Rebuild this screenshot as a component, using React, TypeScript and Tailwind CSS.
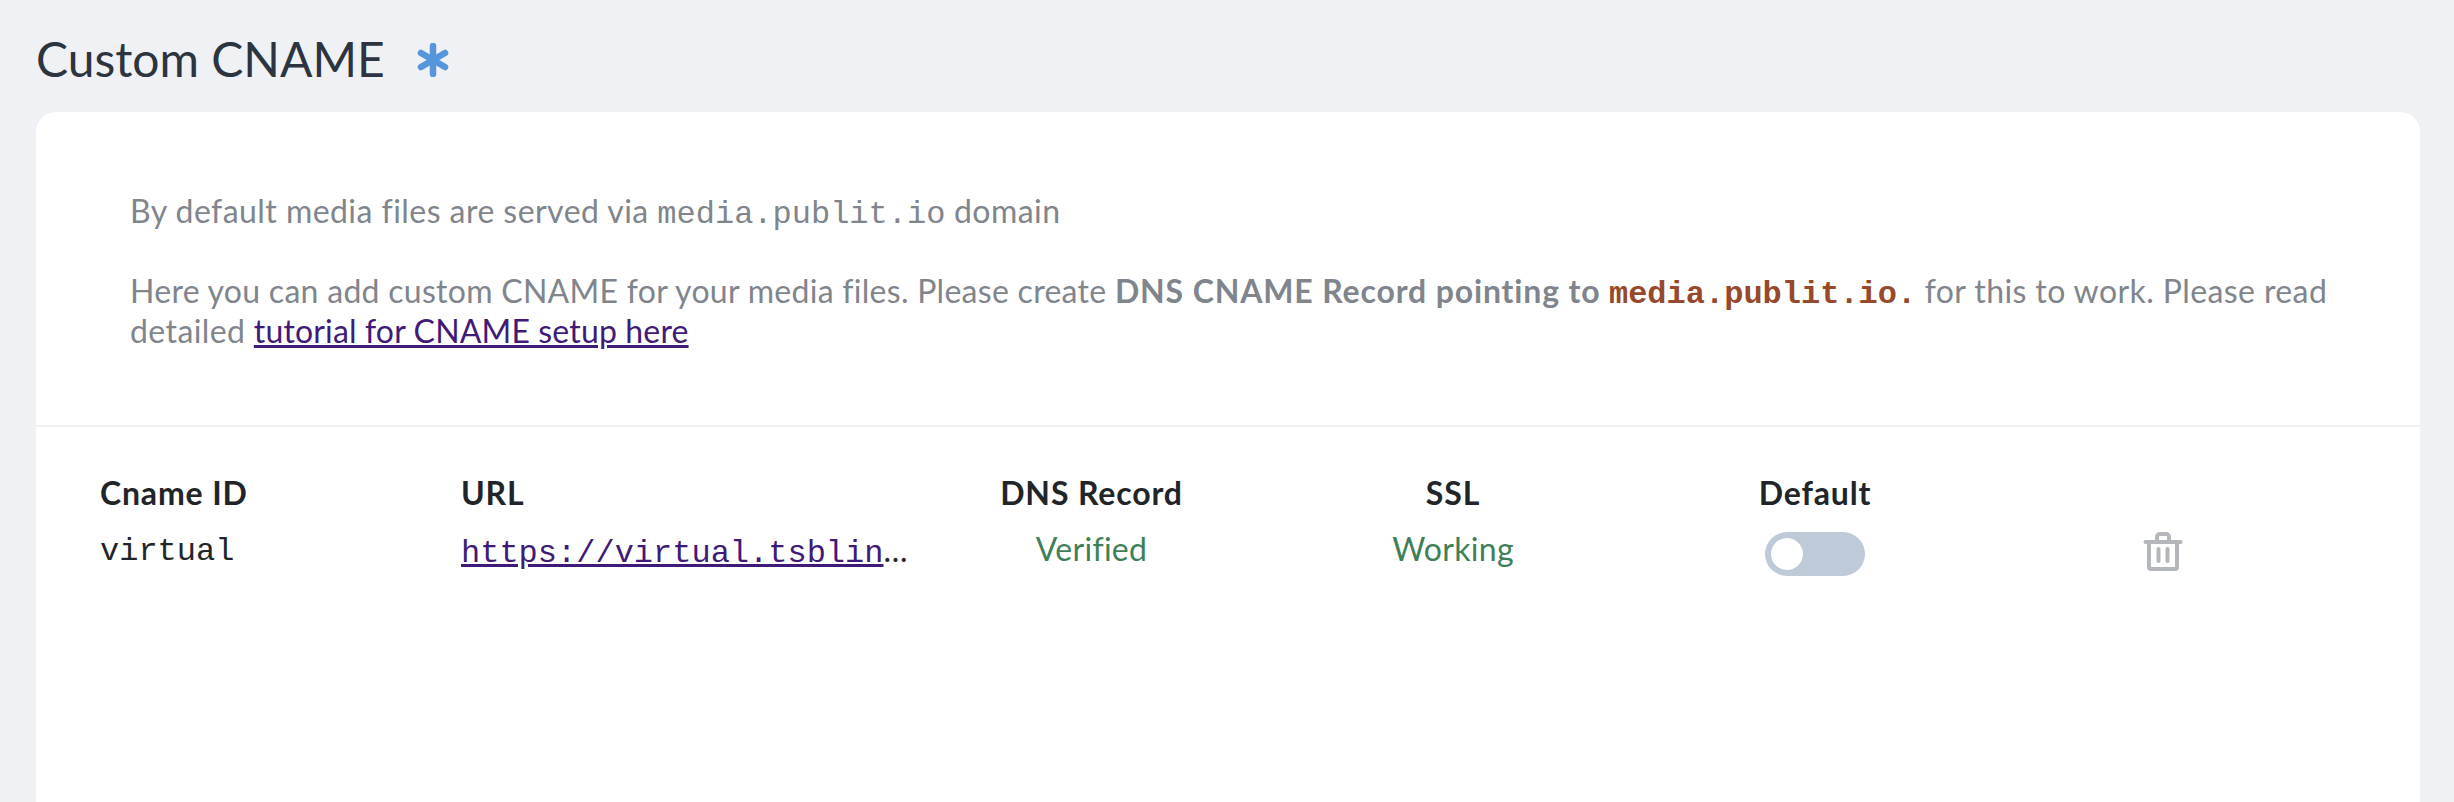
const sans = "font-['Lato','Noto_Sans',sans-serif]";
const mono = "font-['Liberation_Mono',monospace]";

function TrashIcon() {
  return (
    <svg viewBox="0 0 40 40" className="w-10 h-10" fill="none" stroke="#b3b6ba" strokeWidth="4" strokeLinecap="round" strokeLinejoin="round">
      <path d="M2.5 11h35" />
      <path d="M14 11V6a3 3 0 0 1 3-3h6a3 3 0 0 1 3 3V11" />
      <path d="M6 11v25a2 2 0 0 0 2 2h24a2 2 0 0 0 2-2V11" />
      <path d="M15.5 18v12M24.5 18v12" />
    </svg>
  );
}

export default function App() {
  return (
    <div className={`${sans} w-[2454px] h-[802px] overflow-hidden bg-[#eff1f5] pl-9 pr-[34px]`}>
      <div className="h-[112px] flex items-center gap-[32px] pt-[5px]">
        <h1 className="text-[48px] leading-none text-[#2c3440] font-normal">Custom CNAME</h1>
        <svg viewBox="0 0 32 34" className="w-8 h-[34px] mt-[3px]" stroke="#5596dc" strokeWidth="6.5" strokeLinecap="round">
          <path d="M16 3v28M4 10l24 14M28 10L4 24" />
        </svg>
      </div>

      <div className="bg-white rounded-t-[20px] h-[690px]">
        <div className="h-[315px] border-b-2 border-[#f0f1f3] pl-[94px] pr-[80px] pt-[79px] text-[32px] leading-[40px] tracking-[0.28px] text-[#80858d]">
          <p className="tracking-[0.45px]">
            By default media files are served via <code className={`${mono} text-[32px] leading-none tracking-normal`}>media.publit.io</code> domain
          </p>
          <p className="mt-[40px]">
            Here you can add custom CNAME for your media files. Please create{" "}
            <b className="font-bold tracking-[0.85px]">DNS CNAME Record pointing to</b>{" "}
            <code className={`${mono} text-[32px] leading-none tracking-normal font-bold text-[#96492b]`}>media.publit.io.</code>{" "}
            <span className="tracking-[0.4px]">for this to work. Please read detailed</span>{" "}
            <a className="text-[#3f1a78] underline tracking-[0.15px]">tutorial for CNAME setup here</a>
          </p>
        </div>

        <div className="pl-[44px] grid grid-cols-[361px_470px_361px_362px_362px_334px] pt-[46px] text-[32px] leading-[40px] tracking-[0.3px]">
          <div className="px-5 font-bold tracking-[0.85px] text-[#212529]">Cname ID</div>
          <div className="px-5 font-bold tracking-[0.85px] text-[#212529]">URL</div>
          <div className="text-center font-bold tracking-[0.85px] text-[#212529]">DNS Record</div>
          <div className="text-center font-bold tracking-[0.85px] text-[#212529]">SSL</div>
          <div className="text-center font-bold tracking-[0.85px] text-[#212529]">Default</div>
          <div />

          <div className={`${mono} px-5 mt-[19px] text-[32px] leading-none tracking-normal h-[40px] flex items-center text-[#212529]`}>virtual</div>
          <div className="mt-[17px] ml-5 w-[447px] truncate tracking-normal text-[#212529]">
            <a className={`${mono} text-[32px] leading-none text-[#3f1a78] underline`}>https://virtual.tsblink.io</a>
          </div>
          <div className="mt-[16px] text-center text-[#3f7f58]">Verified</div>
          <div className="mt-[16px] text-center text-[#3f7f58]">Working</div>
          <div className="mt-[19px] flex justify-center">
            <div className="w-[100px] h-[44px] rounded-full bg-[#bfcad8] flex items-center pl-[6px]">
              <div className="w-[32px] h-[32px] rounded-full bg-white" />
            </div>
          </div>
          <div className="mt-[18px] flex justify-center">
            <TrashIcon />
          </div>
        </div>
      </div>
    </div>
  );
}
